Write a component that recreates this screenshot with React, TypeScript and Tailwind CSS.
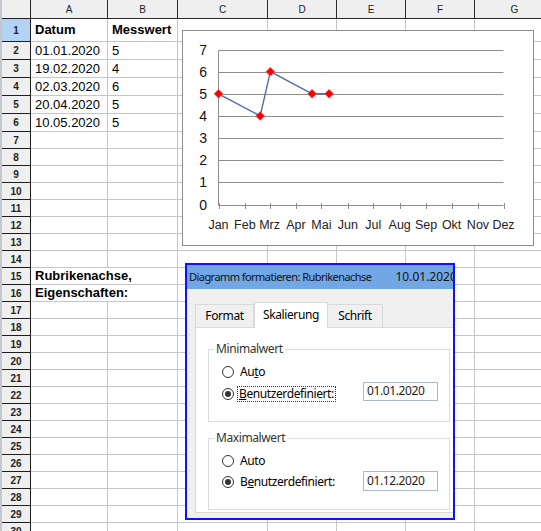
import React from "react";

const colW = ["w-[77px]", "w-[70px]", "w-[90px]", "w-[69px]", "w-[69px]", "w-[69px]", "w-[80px]"];
const colNames = ["A", "B", "C", "D", "E", "F", "G"];

type CellDef = { text: string; bold?: boolean; noRight?: boolean };
const data: Record<number, Record<number, CellDef>> = {
  1: { 0: { text: "Datum", bold: true }, 1: { text: "Messwert", bold: true } },
  2: { 0: { text: "01.01.2020" }, 1: { text: "5" } },
  3: { 0: { text: "19.02.2020" }, 1: { text: "4" } },
  4: { 0: { text: "02.03.2020" }, 1: { text: "6" } },
  5: { 0: { text: "20.04.2020" }, 1: { text: "5" } },
  6: { 0: { text: "10.05.2020" }, 1: { text: "5" } },
  15: { 0: { text: "Rubrikenachse,", bold: true, noRight: true } },
  16: { 0: { text: "Eigenschaften:", bold: true, noRight: true } },
};

const rowHClass = (r: number) => (r === 1 ? "h-[23px]" : r <= 6 ? "h-[18px]" : "h-[17px]");

function Sheet() {
  const rows = Array.from({ length: 30 }, (_, i) => i + 1);
  return (
    <div className="flex font-['Liberation_Sans',Arial,sans-serif] text-black">
      <div className="w-[2px] shrink-0 bg-[#c3c8cf]" />
      <div className="flex flex-col">
        <div className="flex h-[19px]">
          <div className="w-[29px] shrink-0 bg-[#efefef] border-r border-b border-[#222]" />
          {colNames.map((c, i) => (
            <div
              key={c}
              className={`${colW[i]} shrink-0 bg-[#efefef] border-r border-b border-[#2a2a2a] flex items-center justify-center text-[10px] text-[#222]`}
            >
              {c}
            </div>
          ))}
        </div>
        {rows.map((r) => (
          <div key={r} className={`flex ${rowHClass(r)}`}>
            <div
              className={`w-[29px] shrink-0 border-r border-b border-[#1e1e1e] flex items-center justify-center text-[10px] font-bold text-[#222] ${
                r === 1 ? "bg-[#b3d3f4]" : "bg-[#efefef]"
              }`}
            >
              {r}
            </div>
            {colNames.map((c, i) => {
              const cell = data[r]?.[i];
              return (
                <div
                  key={c}
                  className={`${colW[i]} shrink-0 border-b border-[#c6c6c6] flex items-center pl-[4px] whitespace-nowrap text-[13px] ${
                    cell?.noRight ? "border-r-0" : "border-r"
                  } ${cell?.bold ? "font-bold" : ""}`}
                >
                  {cell?.text ?? ""}
                </div>
              );
            })}
          </div>
        ))}
      </div>
    </div>
  );
}

const x0 = 218.5;
const x1 = 503.5;
const dayX = (d: number) => x0 + (d * (x1 - x0)) / 335;
const yV = (v: number) => 204.5 - v * 22.14;
const months = ["Jan", "Feb", "Mrz", "Apr", "Mai", "Jun", "Jul", "Aug", "Sep", "Okt", "Nov", "Dez"];
const monthDays = [0, 31, 60, 91, 121, 152, 182, 213, 244, 274, 305, 335];
const pts: [number, number][] = [
  [0, 5],
  [49, 4],
  [61, 6],
  [110, 5],
  [130, 5],
];

function Chart() {
  return (
    <div className="absolute left-[182px] top-[30px] w-[352px] h-[216px] border border-[#8c8c8c] bg-white">
      <svg width="350" height="214" viewBox="183 31 350 214" className="block">
        {[1, 2, 3, 4, 5, 6, 7].map((v) => (
          <line
            key={v}
            x1={x0}
            x2={x1}
            y1={Math.round(yV(v)) + 0.5}
            y2={Math.round(yV(v)) + 0.5}
            stroke="#8e8e8e"
            strokeWidth="1"
          />
        ))}
        <line x1={x0} x2={x0} y1={Math.round(yV(7)) + 0.5} y2={Math.round(yV(0)) + 0.5} stroke="#8e8e8e" />
        <line x1={x0} x2={x1} y1={Math.round(yV(0)) + 0.5} y2={Math.round(yV(0)) + 0.5} stroke="#8e8e8e" />
        {monthDays.map((d, i) => (
          <line
            key={i}
            x1={Math.round(dayX(d)) + 0.5}
            x2={Math.round(dayX(d)) + 0.5}
            y1={Math.round(yV(0)) - 2}
            y2={Math.round(yV(0)) + 4}
            stroke="#8e8e8e"
          />
        ))}
        {[0, 1, 2, 3, 4, 5, 6, 7].map((v) => (
          <text
            key={v}
            x="207"
            y={yV(v) + 5}
            textAnchor="end"
            fontSize="14"
            fontFamily="Liberation Sans, Arial, sans-serif"
            fill="#111"
          >
            {v}
          </text>
        ))}
        {months.map((m, i) => (
          <text
            key={m}
            x={dayX(monthDays[i])}
            y="228.5"
            textAnchor="middle"
            fontSize="12.5"
            fontFamily="Liberation Sans, Arial, sans-serif"
            fill="#222"
          >
            {m}
          </text>
        ))}
        <polyline
          points={pts.map(([d, v]) => `${dayX(d)},${yV(v)}`).join(" ")}
          fill="none"
          stroke="#4a6fa8"
          strokeWidth="1.4"
        />
        {pts.map(([d, v], i) => {
          const x = dayX(d);
          const y = yV(v);
          return (
            <polygon
              key={i}
              points={`${x},${y - 4.5} ${x + 4.5},${y} ${x},${y + 4.5} ${x - 4.5},${y}`}
              fill="#ff0000"
              stroke="#ff6a6a"
              strokeWidth="0.6"
            />
          );
        })}
      </svg>
    </div>
  );
}

function Radio({ checked }: { checked?: boolean }) {
  return (
    <span className="w-[12px] h-[12px] rounded-full border border-[#333] bg-white flex items-center justify-center shrink-0">
      {checked && <span className="w-[6px] h-[6px] rounded-full bg-[#333]" />}
    </span>
  );
}

function Dialog() {
  return (
    <div className="absolute left-[185px] top-[263px] w-[270px] h-[257px] border-2 border-[#1010ff] bg-[#f0f0f0] overflow-hidden flex flex-col font-['Noto_Sans',sans-serif] text-[12px] tracking-[-0.4px] text-black">
      <div className="h-[24px] shrink-0 bg-[#72a7e6] flex items-center pl-[2px] whitespace-nowrap text-[#111]">
        <span className="text-[11px] tracking-[-0.55px]">Diagramm formatieren: Rubrikenachse</span>
        <span className="ml-[24px] text-[12px] tracking-[0px]">10.01.2020</span>
      </div>
      <div className="pl-[8px] pt-[13px] flex flex-col">
        <div className="flex items-end h-[25px]">
          <div className="w-[59px] h-[23px] border border-b-0 border-[#d9d9d9] bg-[#f0f0f0] flex items-center justify-center">
            Format
          </div>
          <div className="relative z-10 w-[74px] h-[26px] -mb-px border border-b-0 border-[#d9d9d9] bg-white flex items-center justify-center pb-[2px]">
            Skalierung
          </div>
          <div className="w-[55px] h-[23px] border border-b-0 border-l-0 border-[#d9d9d9] bg-[#f0f0f0] flex items-center justify-center">
            Schrift
          </div>
        </div>
        <div className="w-[300px] h-[186px] bg-white border border-[#d9d9d9] pl-[12px] pt-[21px] flex flex-col gap-[16px]">
          <div className="relative w-[242px] h-[73px] border border-[#dcdcdc] pt-[12px] pl-[13px] flex flex-col">
            <span className="absolute left-[5px] top-[-10px] px-[2px] bg-white text-[#333] leading-[18px]">
              Minimalwert
            </span>
            <div className="flex items-center h-[20px]">
              <Radio />
              <span className="ml-[6px]">
                Au<span className="underline">t</span>o
              </span>
            </div>
            <div className="flex items-center h-[23px]">
              <Radio checked />
              <span className="w-[129px] pl-[4px] flex items-center">
                <span className="border border-dotted border-[#333] px-[1px] leading-[14px] -ml-[1px]">
                  <span className="underline">B</span>enutzerdefiniert:
                </span>
              </span>
              <span className="w-[75px] h-[19px] mb-[5px] border border-[#a9b9cf] pl-[3px] flex items-center text-[#222]">
                01.01.2020
              </span>
            </div>
          </div>
          <div className="relative w-[242px] h-[72px] border border-[#dcdcdc] pt-[12px] pl-[13px] flex flex-col">
            <span className="absolute left-[5px] top-[-10px] px-[2px] bg-white text-[#333] leading-[18px]">
              Maximalwert
            </span>
            <div className="flex items-center h-[20px]">
              <Radio />
              <span className="ml-[6px]">Auto</span>
            </div>
            <div className="flex items-center h-[21px]">
              <Radio checked />
              <span className="w-[129px] pl-[6px]">
                B<span className="underline">e</span>nutzerdefiniert:
              </span>
              <span className="w-[75px] h-[20px] mb-[2px] border border-[#a9b9cf] pl-[3px] flex items-center text-[#222]">
                01.12.2020
              </span>
            </div>
          </div>
        </div>
      </div>
    </div>
  );
}

export default function App() {
  return (
    <div className="relative w-[541px] h-[531px] overflow-hidden bg-white">
      <Sheet />
      <Chart />
      <Dialog />
    </div>
  );
}
